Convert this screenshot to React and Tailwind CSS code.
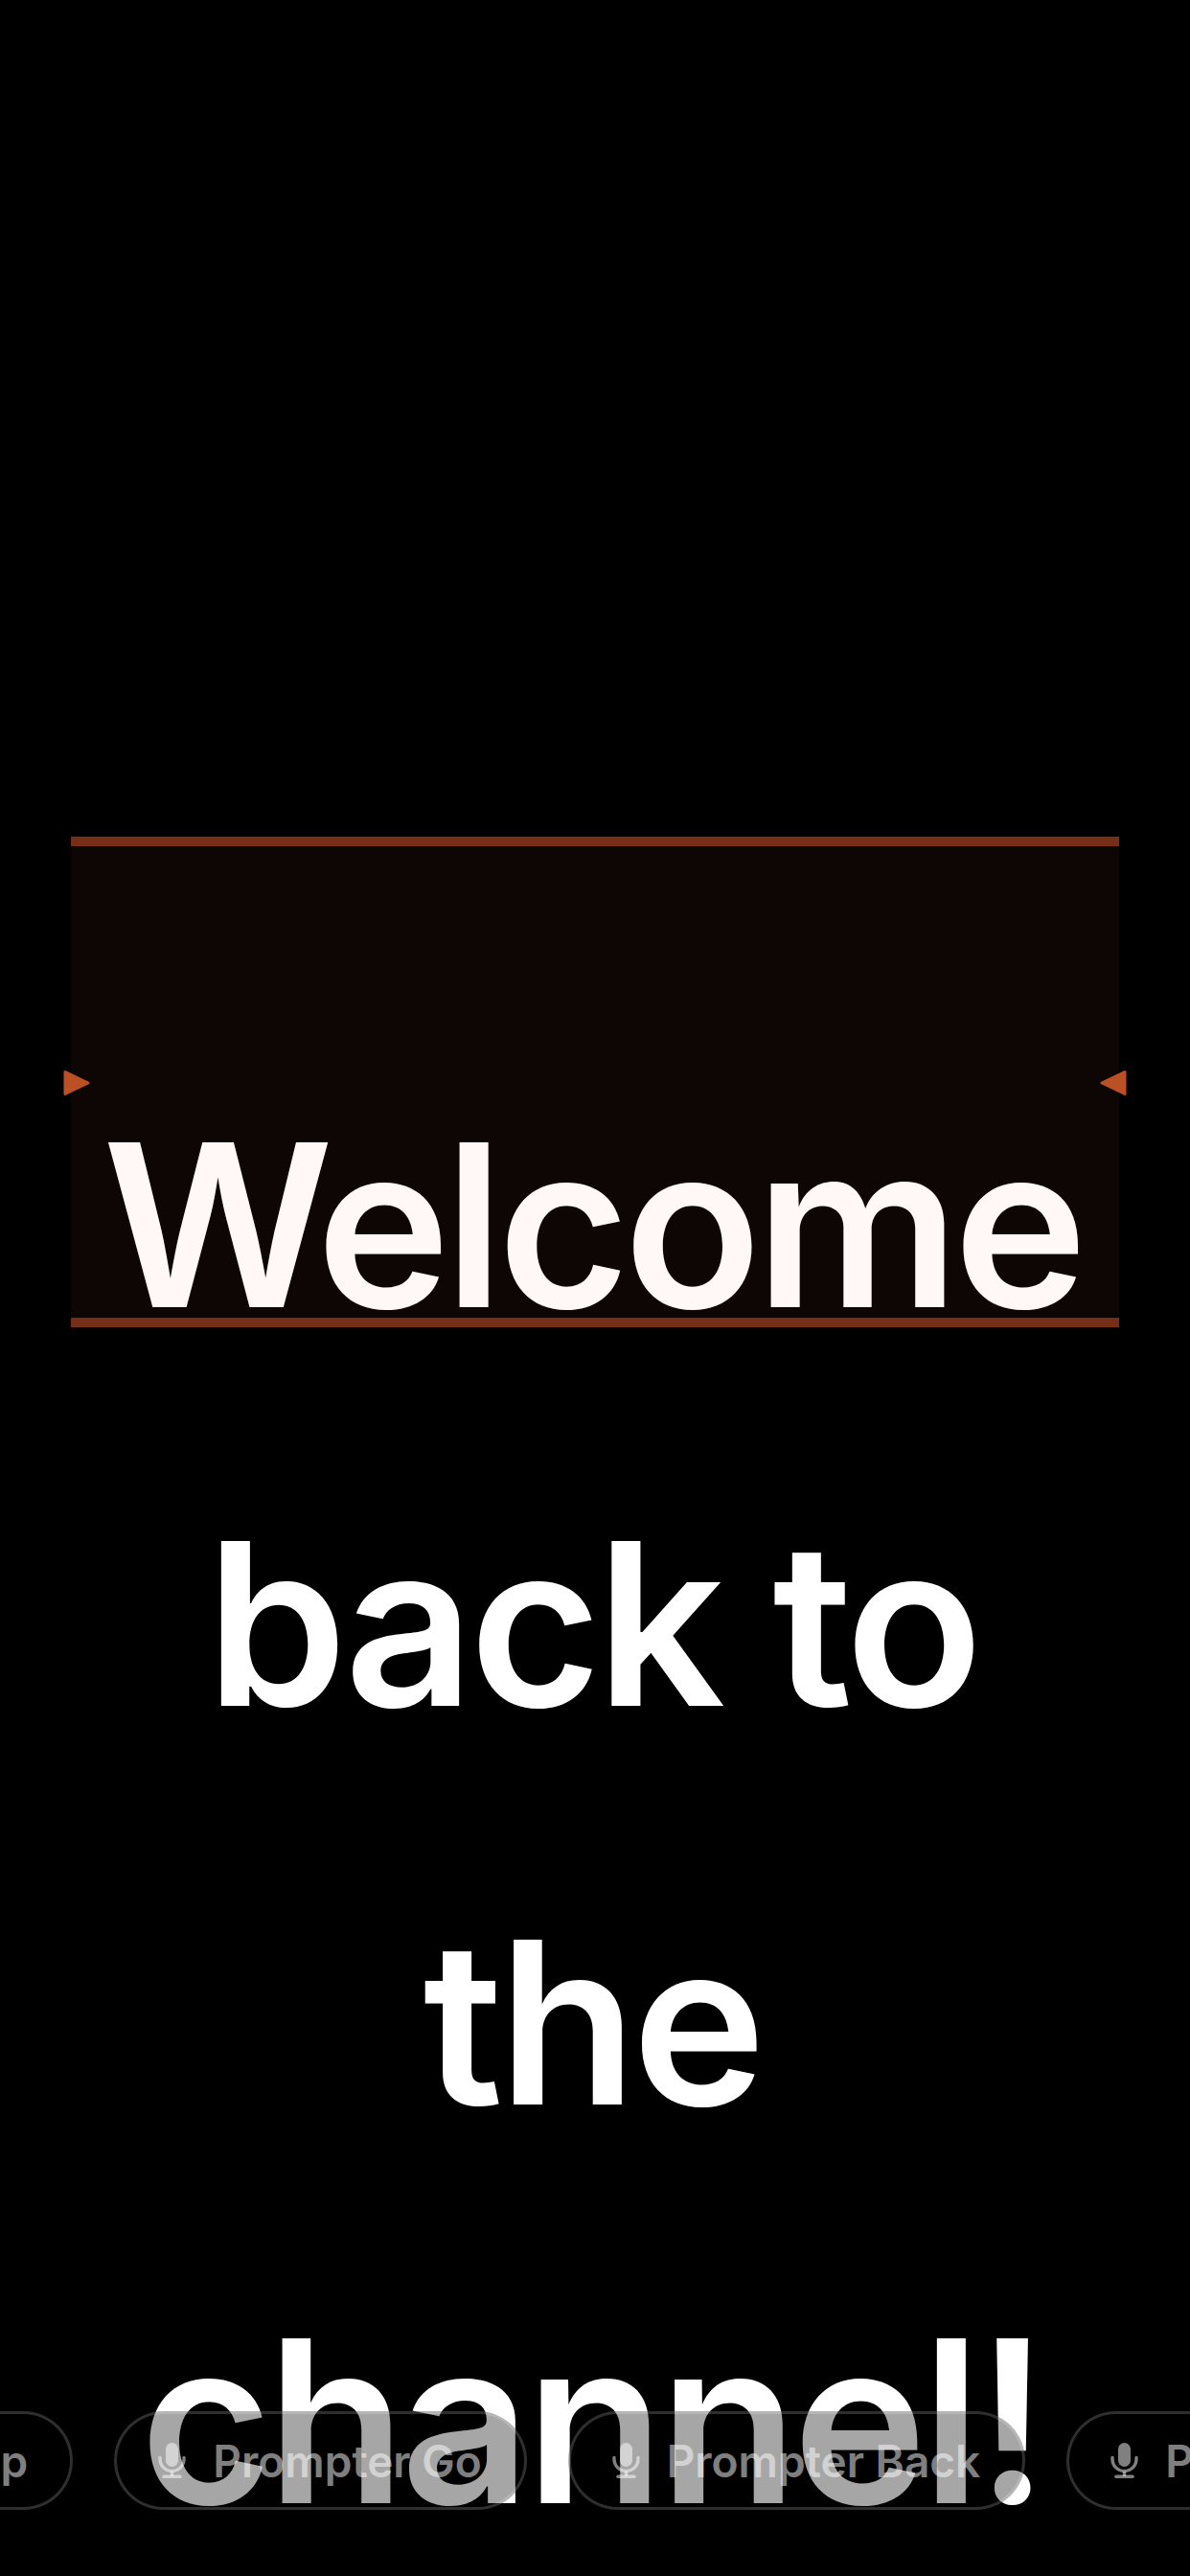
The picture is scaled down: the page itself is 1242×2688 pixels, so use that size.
const FONT = 'font-["Inter","Liberation_Sans",sans-serif]';

const commands = ['Prompter Stop', 'Prompter Go', 'Prompter Back', 'Prompter Reset'];

function MicIcon() {
  return (
    <svg width="29" height="37" viewBox="0 0 29 37" className="shrink-0" fill="none">
      <rect x="8" y="0" width="13" height="25" rx="6.5" fill="currentColor" />
      <path d="M2 15.5v1.5c0 7 5.5 12.5 12.5 12.5S27 24 27 17v-1.5" stroke="currentColor" strokeWidth="3.4" strokeLinecap="round" />
      <path d="M14.5 30v5" stroke="currentColor" strokeWidth="3.4" />
      <path d="M6 35.2h17" stroke="currentColor" strokeWidth="3.6" strokeLinecap="round" />
    </svg>
  );
}

function CommandPill({ label }) {
  return (
    <div className="flex h-[103px] shrink-0 items-center gap-[28px] rounded-[52px] border-[3px] border-white/18 bg-black/35 pl-[43px] pr-[44px] text-white/50">
      <MicIcon />
      <span className="whitespace-nowrap text-[46px] font-semibold leading-none">{label}</span>
    </div>
  );
}

export default function App() {
  return (
    <div className={`relative h-[2688px] w-[1242px] overflow-hidden bg-black ${FONT}`}>
      {/* scrolling script */}
      <p className="pl-[66px] pr-[72px] pt-[1070px] text-center text-[236px] font-semibold leading-[416px] tracking-[-5px] text-white">
        <span className="tracking-[-6px]">Welcome</span> back to the channel!
      </p>

      {/* reading zone */}
      <div className="absolute left-[74px] top-[873px] h-[512px] w-[1094px] border-y-[10px] border-[#752f17] bg-[#ff7850]/5" />
      <svg className="absolute left-[66px] top-[1116px]" width="28" height="28" viewBox="0 0 28 28">
        <path d="M2 2.5 26 14 2 25.5Z" fill="#bb5025" stroke="#bb5025" strokeWidth="3" strokeLinejoin="round" />
      </svg>
      <svg className="absolute left-[1148px] top-[1116px]" width="28" height="28" viewBox="0 0 28 28">
        <path d="M26 2.5 2 14 26 25.5Z" fill="#bb5025" stroke="#bb5025" strokeWidth="3" strokeLinejoin="round" />
      </svg>

      {/* voice commands */}
      <div className="absolute left-[-394px] top-[2516px] flex gap-[43px]">
        {commands.map((c) => (
          <CommandPill key={c} label={c} />
        ))}
      </div>
    </div>
  );
}
